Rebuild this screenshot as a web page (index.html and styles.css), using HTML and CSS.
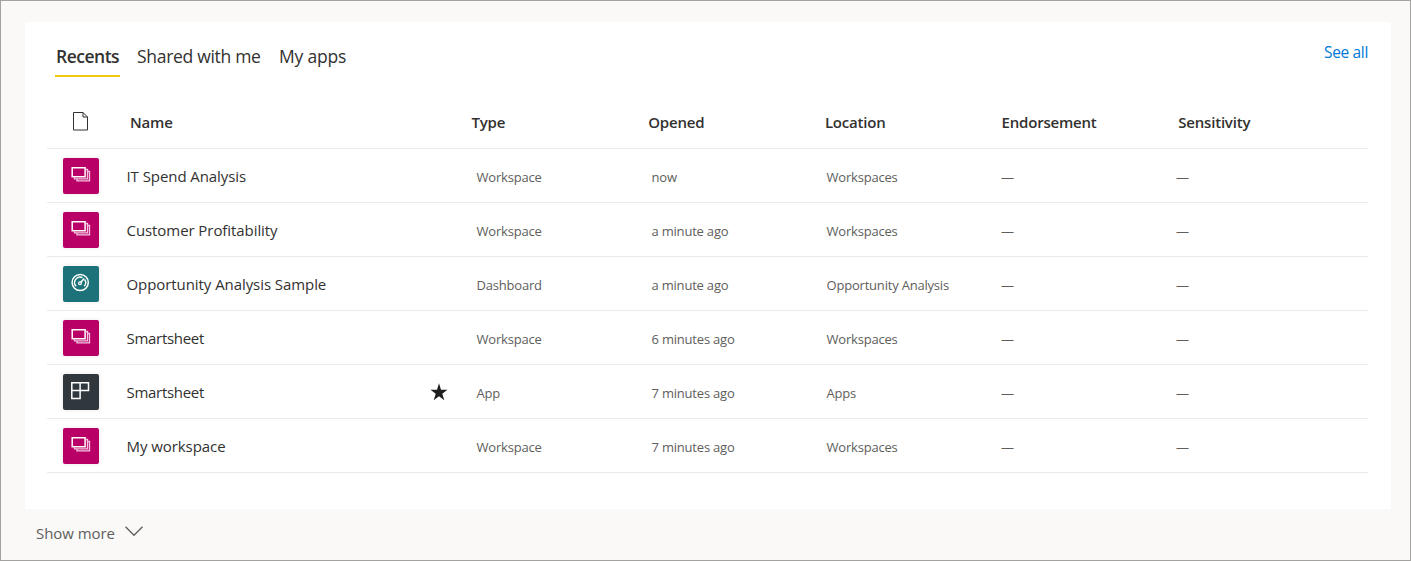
FILE: index.html
```
<!DOCTYPE html>
<html lang="en">
<head>
<meta charset="utf-8">
<title>Recents</title>
<link rel="stylesheet" href="styles.css">
</head>
<body>
<svg width="0" height="0" class="defs">
  <symbol id="workspace" viewBox="0 0 36 36">
    <path d="M11.500 19.500v1.300h13V11.500H23M14 21.500v1.300h12.500v-9.300H25" fill="none" stroke="#f3c4df" stroke-width="1.300"/>
    <path d="M9.200 9.700h12.900v9H9.200z" fill="none" stroke="#fff" stroke-width="1.500"/>
  </symbol>
  <symbol id="dashboard" viewBox="0 0 36 36">
    <circle cx="17.200" cy="16.500" r="8.100" fill="none" stroke="#fff" stroke-width="1.500"/>
    <path d="M13.200 20.300a5.400 5.400 0 0 1 6.300-8.600M21.600 13.500a5.400 5.400 0 0 1-.400 6.800" fill="none" stroke="#fff" stroke-width="1.400"/>
    <path d="M17.600 16.600l3.600-4.100" stroke="#fff" stroke-width="1.500"/>
    <circle cx="17" cy="17.300" r="1.400" fill="none" stroke="#fff" stroke-width="1.200"/>
  </symbol>
  <symbol id="app" viewBox="0 0 36 36">
    <path d="M8.800 8.800h16.700v7.800H8.800zM8.800 16.600v7.900h8.300V8.800" fill="none" stroke="#fff" stroke-width="1.500"/>
  </symbol>
</svg>
<main class="page">
  <section class="card">
    <header class="top">
      <nav class="tabs"><a class="tab active"><span>Recents</span></a><a class="tab shared"><span>Shared with me</span></a><a class="tab apps"><span>My apps</span></a></nav>
      <a class="see">See all</a>
    </header>
    <div class="table">
      <div class="row head">
        <svg class="doc" width="16" height="19" viewBox="0 0 16 19"><path d="M.5.5h9.500l4.500 4.500v13H.5zM10 .5V5h4.500" fill="none" stroke="#323130"/></svg>
        <b>Name</b><i></i><b>Type</b><b>Opened</b><b>Location</b><b>Endorsement</b><b>Sensitivity</b>
      </div>
      <div class="row"><svg class="tile pink"><use href="#workspace"/></svg><span class="name">IT Spend Analysis</span><i></i><span>Workspace</span><span>now</span><span>Workspaces</span><em>—</em><em>—</em></div>
      <div class="row"><svg class="tile pink"><use href="#workspace"/></svg><span class="name">Customer Profitability</span><i></i><span>Workspace</span><span>a minute ago</span><span>Workspaces</span><em>—</em><em>—</em></div>
      <div class="row"><svg class="tile teal"><use href="#dashboard"/></svg><span class="name">Opportunity Analysis Sample</span><i></i><span>Dashboard</span><span>a minute ago</span><span>Opportunity Analysis</span><em>—</em><em>—</em></div>
      <div class="row"><svg class="tile pink"><use href="#workspace"/></svg><span class="name tight">Smartsheet</span><i></i><span>Workspace</span><span>6 minutes ago</span><span>Workspaces</span><em>—</em><em>—</em></div>
      <div class="row"><svg class="tile dark"><use href="#app"/></svg><span class="name tight">Smartsheet</span><svg class="star" width="18" height="18" viewBox="0 0 18 18"><path d="M9 .3l2 6.400h6.500l-5.200 4 2 6.500L9 13.300l-5.300 3.900 2-6.500-5.200-4H7z" fill="#201f1e"/></svg><span>App</span><span>7 minutes ago</span><span>Apps</span><em>—</em><em>—</em></div>
      <div class="row"><svg class="tile pink"><use href="#workspace"/></svg><span class="name">My workspace</span><i></i><span>Workspace</span><span>7 minutes ago</span><span>Workspaces</span><em>—</em><em>—</em></div>
    </div>
  </section>
  <div class="more"><span>Show more</span><svg width="18" height="11" viewBox="0 0 18 11"><path d="M.5.8L9 9.300 17.500.8" fill="none" stroke="#605e5c" stroke-width="1.300"/></svg></div>
</main>
</body>
</html>
```
FILE: styles.css
```
* { box-sizing: border-box; }
body { margin: 0; font-family: "Open Sans", "Noto Sans", sans-serif; color: #323130; }
.defs { display: none; }
.page { height: 561px; border: 1px solid #a3a2a1; background: #faf9f8; padding: 21px 19px 0 24px; }
.card { height: 487px; background: #fff; border-radius: 2px; padding: 0 23px 0 22px; }
.top { height: 73px; display: flex; justify-content: space-between; align-items: flex-start; }
.tabs { display: flex; padding: 20px 0 0 8px; gap: 17px; font-size: 17.5px; line-height: 29px; white-space: nowrap; letter-spacing: -.3px; }
.tab { height: 35px; padding: 0 1px; }
.active { font-weight: 600; border-bottom: 2px solid #f2c811; width: 65px; letter-spacing: -.5px; }
.shared { width: 125px; padding-left: 0; }
.apps { padding-left: 0; letter-spacing: -.2px; }
.see { color: #0078d4; font-size: 15.5px; line-height: 20px; margin-top: 20px; letter-spacing: -.35px; }
.row { height: 54px; border-bottom: 1px solid #eaeaea; display: grid; grid-template-columns: 79.5px 303px 42px 175px 175px 175px 175px 1fr; align-items: center; font-size: 13px; color: #605e5c; white-space: nowrap; letter-spacing: -.2px; }
.row span { padding-left: 5px; padding-top: 2px; }
.row .name { font-size: 15px; color: #323130; padding: 0; letter-spacing: -.07px; }
.row .tight { letter-spacing: -.3px; }
.row em { font-style: normal; padding: 2px 0 0 4.5px; }
.row.head { grid-template-columns: 83px 300px 41.5px 176.7px 176.7px 176.7px 176.7px 1fr; font-size: 15px; color: #323130; }
.head b { font-weight: 600; }
.doc { margin-left: 26px; }
.tile { width: 36px; height: 36px; margin-left: 16px; border-radius: 2px; box-shadow: 0 0 4px rgba(0,0,0,.1); }
.pink { background: #b90066; }
.teal { background: #1c7278; }
.dark { background: #30383e; }
.more { display: flex; align-items: center; height: 48px; padding-left: 11px; gap: 10px; font-size: 15px; color: #605e5c; letter-spacing: -.05px; }
.more svg { margin-bottom: 3px; }
```
